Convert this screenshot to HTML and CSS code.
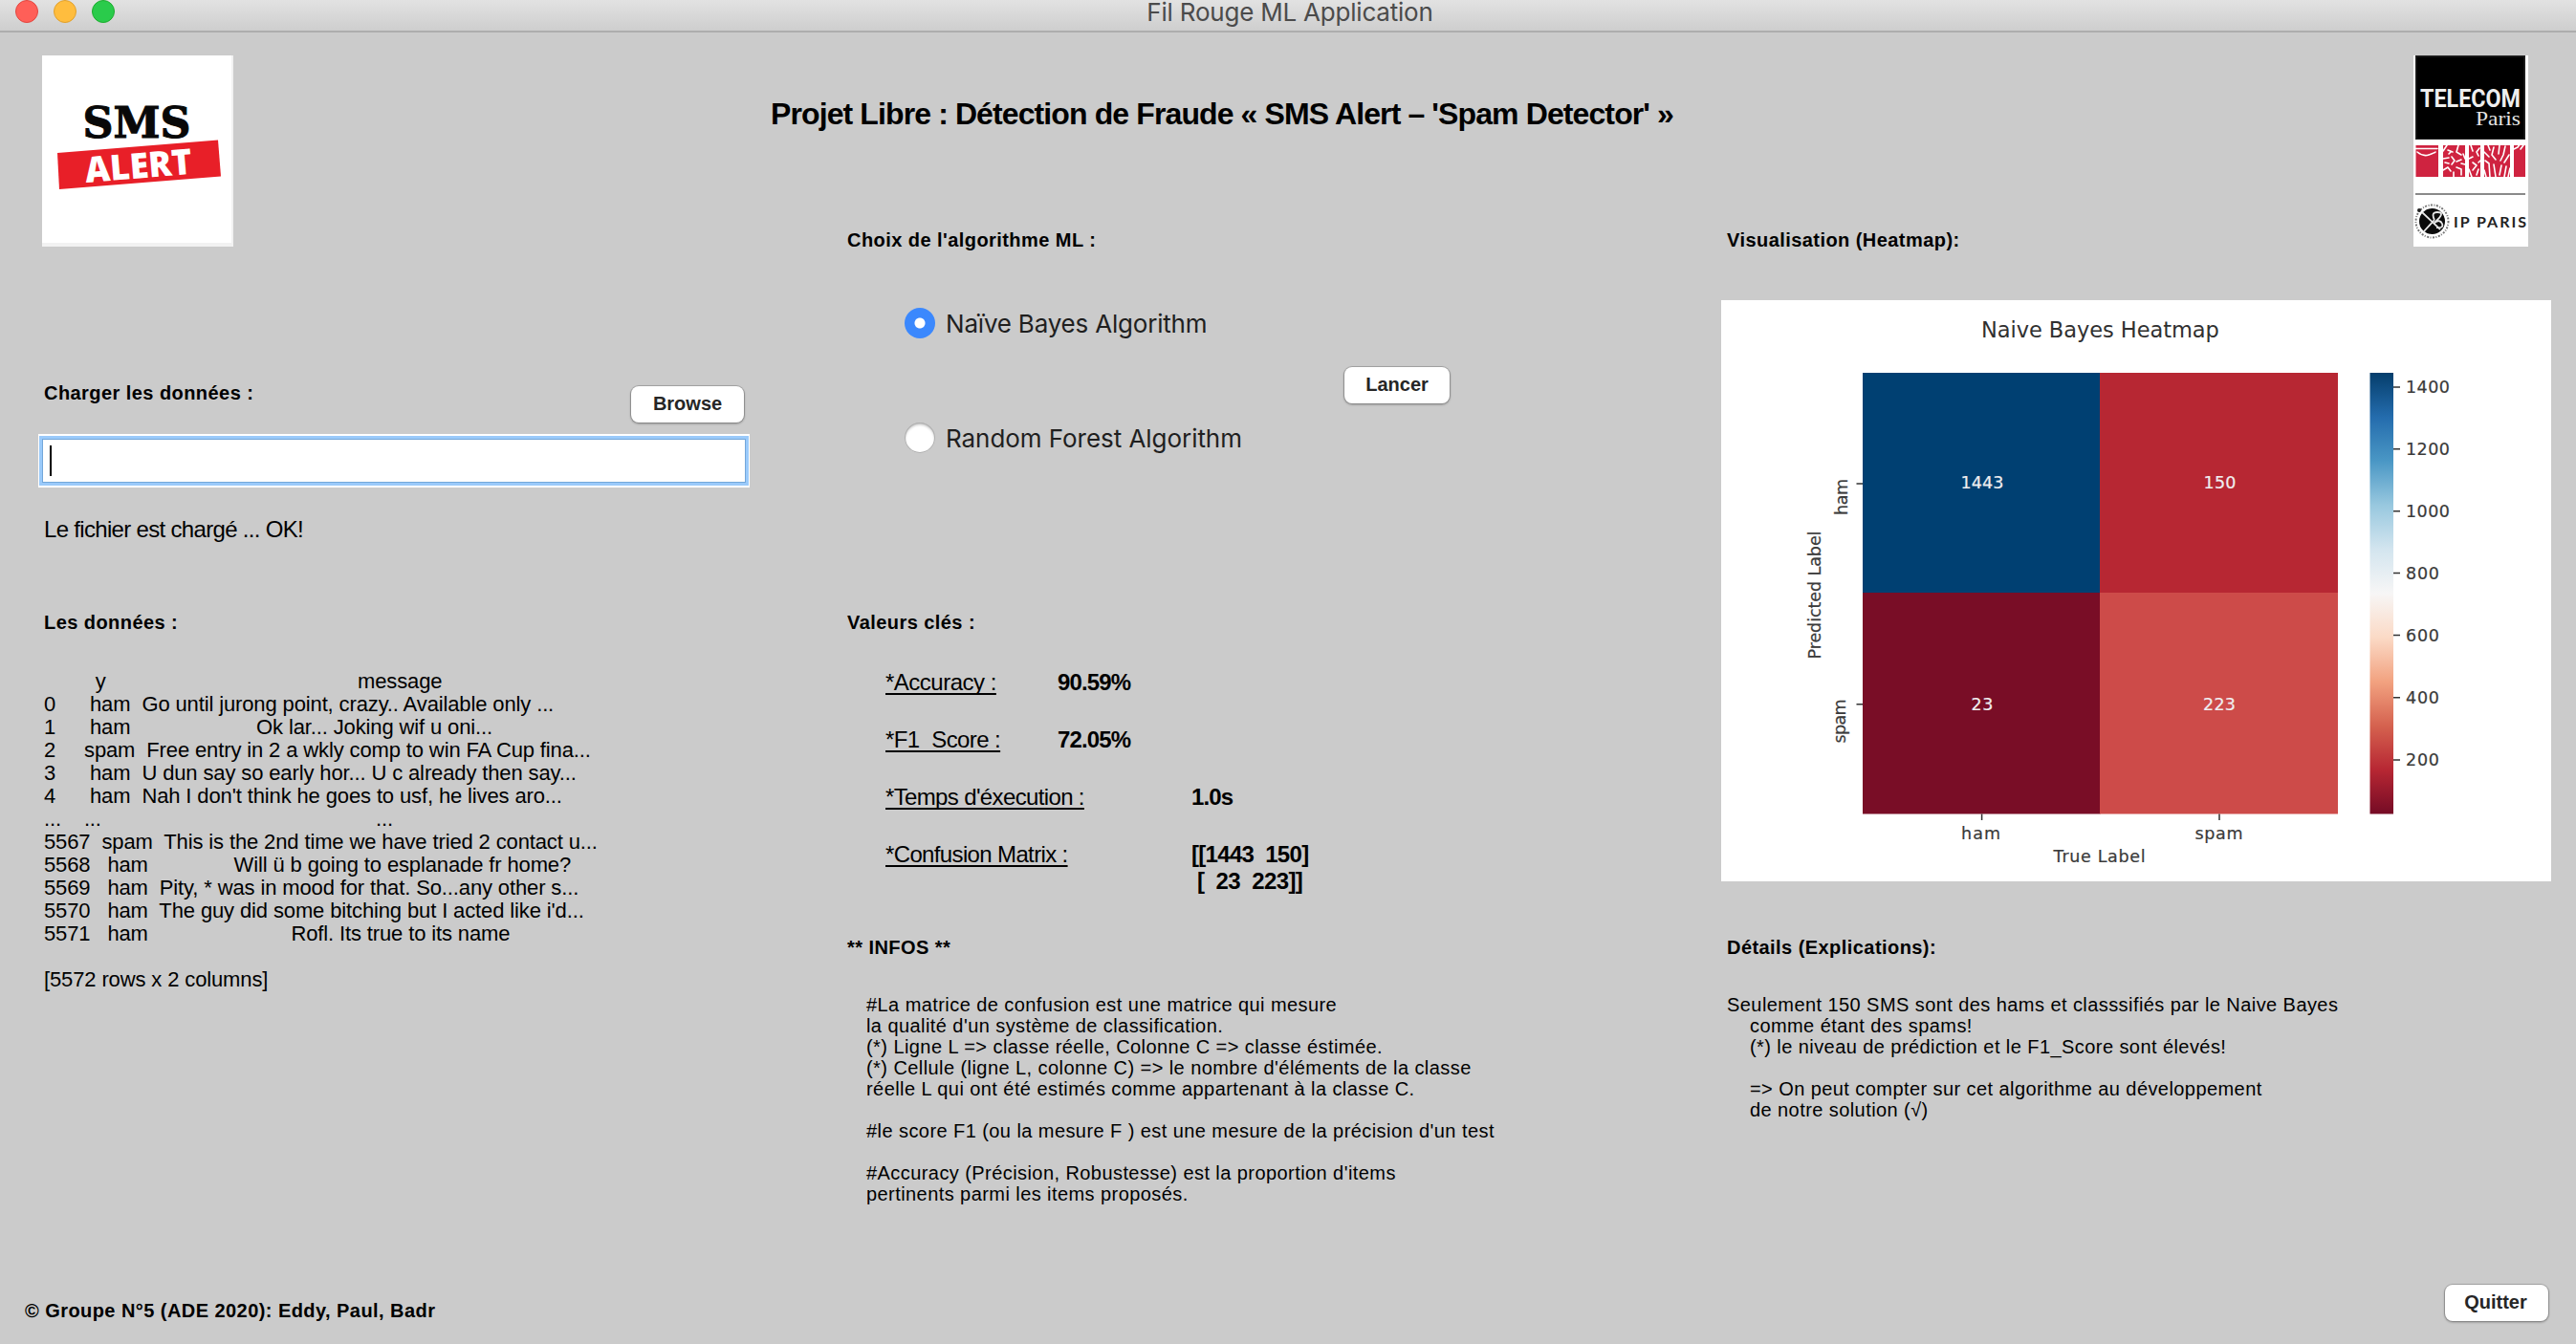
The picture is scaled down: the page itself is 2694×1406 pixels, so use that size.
FILE: index.html
```html
<!DOCTYPE html>
<html lang="fr">
<head>
<meta charset="utf-8">
<title>Fil Rouge ML Application</title>
<link rel="stylesheet" href="styles.css">
</head>
<body>
<header class="titlebar">
  <div class="lights"><i class="light light-close"></i><i class="light light-min"></i><i class="light light-max"></i></div>
  <span class="titlebar-text">Fil Rouge ML Application</span>
</header>

<main class="columns">
  <section class="col col-left">
    <svg class="logo-sms" width="200" height="200" viewBox="0 0 200 200">
      <rect width="200" height="200" fill="#f2f2f2"/>
      <rect width="198" height="196" fill="#fff"/>
      <text x="99" y="85.500" class="logo-serif" text-anchor="middle" textLength="113" lengthAdjust="spacingAndGlyphs">SMS</text>
      <path d="M16 102 184 88.500 187 126.500 18 140z" fill="#e81f28"/>
      <g transform="translate(46 133) rotate(-4.700)"><text class="logo-alert" x="0" y="0" textLength="112" lengthAdjust="spacingAndGlyphs">ALERT</text></g>
    </svg>
    <div class="load-row">
      <h2>Charger les données :</h2>
      <button class="btn btn-browse">Browse</button>
    </div>
    <div class="field"><span class="caret"></span></div>
    <p class="status">Le fichier est chargé ... OK!</p>
    <h2 class="mt-72">Les données :</h2>
    <pre class="table">         y                                            message
0      ham  Go until jurong point, crazy.. Available only ...
1      ham                      Ok lar... Joking wif u oni...
2     spam  Free entry in 2 a wkly comp to win FA Cup fina...
3      ham  U dun say so early hor... U c already then say...
4      ham  Nah I don't think he goes to usf, he lives aro...
...    ...                                                ...
5567  spam  This is the 2nd time we have tried 2 contact u...
5568   ham               Will ü b going to esplanade fr home?
5569   ham  Pity, * was in mood for that. So...any other s...
5570   ham  The guy did some bitching but I acted like i'd...
5571   ham                         Rofl. Its true to its name

[5572 rows x 2 columns]</pre>
  </section>

  <section class="col col-mid">
    <h1>Projet Libre : Détection de Fraude « SMS Alert – 'Spam Detector' »</h1>
    <div class="block">
      <h2>Choix de l'algorithme ML :</h2>
      <div class="choice">
        <div class="radios">
          <div class="option"><span class="radio radio-on"></span><span class="option-a">Naïve Bayes Algorithm</span></div>
          <div class="option"><span class="radio"></span><span class="option-b">Random Forest Algorithm</span></div>
        </div>
        <button class="btn btn-run">Lancer</button>
      </div>
      <h2 class="mt-166">Valeurs clés :</h2>
      <div class="metrics">
        <div class="metric"><span class="m-name m-acc">*Accuracy :</span><b>90.59%</b></div>
        <div class="metric"><span class="m-name m-f1">*F1_Score :</span><b>72.05%</b></div>
        <div class="metric metric-wide"><span class="m-name">*Temps d'éxecution :</span><b>1.0s</b></div>
        <div class="metric metric-wide"><span class="m-name">*Confusion Matrix :</span><b class="matrix">[[1443  150]
<span class="matrix-row"> [  23  223]]</span></b></div>
      </div>
      <h2 class="mt-44">** INFOS **</h2>
      <pre class="notes notes-mid">#La matrice de confusion est une matrice qui mesure
la qualité d'un système de classification.
(*) Ligne L =&gt; classe réelle, Colonne C =&gt; classe éstimée.
(*) Cellule (ligne L, colonne C) =&gt; le nombre d'éléments de la classe
réelle L qui ont été estimés comme appartenant à la classe C.

#le score F1 (ou la mesure F ) est une mesure de la précision d'un test

#Accuracy (Précision, Robustesse) est la proportion d'items
pertinents parmi les items proposés.</pre>
    </div>
  </section>

  <section class="col col-right">
    <div class="right-head">
      <h2>Visualisation (Heatmap):</h2>
      <svg width="120" height="200" viewBox="0 0 120 200">
        <rect width="120" height="200" fill="#fff"/>
        <rect x="2" y="0" width="115" height="88" fill="#222"/>
        <rect x="3.500" y="1.500" width="112" height="85.500" fill="#000"/>
        <text x="7" y="53.500" class="tp-name" textLength="105" lengthAdjust="spacingAndGlyphs">TELECOM</text>
        <text x="65" y="73" class="tp-city" textLength="47" lengthAdjust="spacingAndGlyphs">Paris</text>
        <path fill="#cf2340" d="M2.500 94h23.500v33H2.500zM31 94h23v33H31zM58 94h12v33H58zM74 94h27v33H74zM105 94h12v33h-12z"/>
        <g fill="none" stroke="#fff" stroke-linecap="round" stroke-linejoin="round" stroke-width="1.600">
          <path d="M2 97.500h23M4 101q6 5 12 3t7-3"/>
          <path d="M31 100l4-6M36 99l5 2M47 94l-2 7 5 3M31 108l6-1M40 106l3 4-3 4M50 109l-5 2M31 120l5-3 3 4M45 117l5 2v6M33 112l4 1M52 103l2 5M54 114l-4-1M42 122v5M37 103l2-2"/>
          <path d="M60 94l2 6M69 97l-3 4 2 4M58 108l4-2M62 112l4 3-4 5M70 110l-2 2M58 119l3 8M68 119l-2 6"/>
          <path d="M74 101l5 5M78 94l2 5M84 96l-2 8 4 5M90 94l-1 9M96 95l-2 9-3 6M100 104l-5 8M75 110l4 3 1 14M84 114l2 13M92 115l-2 10M97 116l-2 11M74 120l2 7M101 118l-2 9"/>
          <path d="M105 98l4-2 3-4M115 94l-3 4"/>
        </g>
        <path d="M2 145h115" stroke="#8a8a8a" stroke-width="2"/>
        <circle cx="19.500" cy="173.500" r="17" fill="none" stroke="#777" stroke-width="2" stroke-dasharray="2 1.600 1 1.400"/>
        <circle cx="19.500" cy="173.500" r="13.500" fill="#0b0b0b"/>
        <path d="M9 164 28 182M11 184 22 172M22 172q-4-8 3-8t2 6l-5 5q6-4 8 1t-6 4" fill="none" stroke="#e8e8e8" stroke-width="1.800"/>
        <circle cx="6" cy="162" r="2" fill="#222"/>
        <text x="42" y="179.500" class="tp-ip" textLength="76">IP PARIS</text>
      </svg>
    </div>
    <svg class="heatmap" width="868" height="608" viewBox="1800 314 868 608">
      <defs>
        <linearGradient id="rdbu" x1="0" y1="1" x2="0" y2="0">
          <stop offset="0" stop-color="#750b25"/><stop offset=".1" stop-color="#b72733"/><stop offset=".2" stop-color="#d5624f"/>
          <stop offset=".3" stop-color="#f2a280"/><stop offset=".4" stop-color="#fbdac6"/><stop offset=".5" stop-color="#f7f6f6"/>
          <stop offset=".6" stop-color="#d3e5ef"/><stop offset=".7" stop-color="#98c8df"/><stop offset=".8" stop-color="#4a97c5"/>
          <stop offset=".9" stop-color="#246cad"/><stop offset="1" stop-color="#053e6c"/>
        </linearGradient>
      </defs>
      <rect x="1800" y="314" width="868" height="608" fill="#fff"/>
      <rect x="1948" y="390" width="248.500" height="231" fill="#004072"/>
      <rect x="2196" y="390" width="249" height="231" fill="#b72733"/>
      <rect x="1948" y="620" width="248.500" height="231.500" fill="#790d26"/>
      <rect x="2196" y="620" width="249" height="231.500" fill="#cd4b49"/>
      <rect x="2478.500" y="390" width="24.500" height="461.500" fill="url(#rdbu)"/>
      <g class="ticks"><path d="M2503 405h7M2503 469.800h7M2503 534.700h7M2503 599.600h7M2503 664.500h7M2503 729.800h7M2503 795.100h7M1941.500 506h6.500M1941.500 736.800h6.500M2072.600 851.500v6.500M2321 851.500v6.500"/></g>
      <text class="plot-title" x="2196.400" y="353" text-anchor="middle" textLength="249">Naive Bayes Heatmap</text>
      <g class="plot" text-anchor="middle">
        <text class="annot" x="2073" y="511" textLength="45">1443</text>
        <text class="annot" x="2321.500" y="511" textLength="34">150</text>
        <text class="annot" x="2073" y="742.500" textLength="23">23</text>
        <text class="annot" x="2321" y="742.500" textLength="34">223</text>
        <text x="2071.500" y="878" textLength="41">ham</text>
        <text x="2320.500" y="878" textLength="50">spam</text>
        <text x="2195.600" y="902" textLength="96">True Label</text>
        <text transform="translate(1932 520) rotate(-90)" textLength="38">ham</text>
        <text transform="translate(1930 754.500) rotate(-90)" textLength="46">spam</text>
        <text transform="translate(1903.500 622.500) rotate(-90)" textLength="134">Predicted Label</text>
      </g>
      <g class="plot">
        <text x="2516" y="410.500" textLength="46">1400</text>
        <text x="2516" y="475.500" textLength="46">1200</text>
        <text x="2516" y="540.500" textLength="46">1000</text>
        <text x="2516" y="605.500" textLength="35">800</text>
        <text x="2516" y="671" textLength="35">600</text>
        <text x="2516" y="736" textLength="35">400</text>
        <text x="2516" y="801" textLength="35">200</text>
      </g>
    </svg>
    <h2 class="mt-58">Détails (Explications):</h2>
    <pre class="notes">Seulement 150 SMS sont des hams et classsifiés par le Naive Bayes
    comme étant des spams!
    (*) le niveau de prédiction et le F1_Score sont élevés!

    =&gt; On peut compter sur cet algorithme au développement
    de notre solution (√)</pre>
  </section>
</main>

<footer class="footer">
  <h2>© Groupe N°5 (ADE 2020): Eddy, Paul, Badr</h2>
  <button class="btn btn-quit">Quitter</button>
</footer>
</body>
</html>
```
FILE: styles.css
```css
* { box-sizing: border-box; margin: 0; padding: 0; }

body {
  width: 2694px;
  height: 1406px;
  overflow: hidden;
  background: #cbcbcb;
  color: #000;
  font-family: "Liberation Sans", Arial, sans-serif;
}

h1, h2, p, pre { font-family: inherit; white-space: pre; }
h1 { font-size: 32px; line-height: 36px; letter-spacing: -0.89px; }
h2 { font-size: 20px; line-height: 22px; letter-spacing: 0.44px; }

/* Title bar */
.titlebar {
  display: grid;
  grid-template-columns: 1fr auto 1fr;
  height: 34px;
  background: linear-gradient(#e2e2e2, #cecece);
  border-bottom: 2px solid #adadad;
}
.lights { display: flex; gap: 16px; padding-left: 16px; }
.light { width: 24px; height: 24px; border-radius: 50%; border: 1px solid; }
.light-close { background: #ff5f58; border-color: #e2463f; }
.light-min { background: #ffbd3e; border-color: #e0a02d; }
.light-max { background: #2acb4b; border-color: #1dad2e; }
.titlebar-text {
  padding-left: 4px;
  font: 26px/26px Inter, sans-serif;
  letter-spacing: -0.21px;
  color: #4b4b4b;
}

/* Columns */
.columns { display: grid; grid-template-columns: 800px 1000px 1fr; height: 1309px; }
.col { display: flex; flex-direction: column; align-items: flex-start; }
.mt-44 { margin-top: 44px; }
.mt-58 { margin-top: 58px; }
.mt-72 { margin-top: 72px; }
.mt-166 { margin-top: 166px; }

.col-left { padding: 24px 0 0 46px; }
.logo-sms { display: block; margin-left: -2px; }
.logo-serif { font: bold 44px "DejaVu Serif", serif; fill: #080808; stroke: #080808; stroke-width: 1px; }
.logo-alert { font: 800 37px "Open Sans", sans-serif; fill: #fff; }
.load-row {
  display: flex;
  justify-content: space-between;
  align-items: flex-start;
  width: 732px;
  margin-top: 142px;
}
.field {
  width: 744px;
  height: 56px;
  margin: 12px 0 0 -6px;
  padding: 6px 8px;
  background: #fff;
  border: 2px solid #fff;
  border-width: 2px 1px;
  box-shadow: inset 0 0 0 3px #9acafa, inset 0 0 0 4px #73a7da;
}
.caret { display: block; width: 2px; height: 32px; margin: 4px 0 0 3px; background: #000; }
.status { margin-top: 30px; font-size: 24px; line-height: 28px; letter-spacing: -0.68px; }
.table { margin-top: 39px; font-size: 22px; line-height: 24px; letter-spacing: -0.128px; }

/* Buttons */
.btn {
  height: 38px;
  padding-bottom: 2px;
  border: 0;
  border-radius: 8px;
  background: #fff;
  box-shadow: 0 0 0 1px rgba(0, 0, 0, .16), 0 1px 2px 1px rgba(0, 0, 0, .2);
  color: #262626;
  font: bold 20px/22px "Liberation Sans", Arial, sans-serif;
}
.btn-browse { width: 118px; margin-top: 4px; }
.btn-run { width: 110px; }
.btn-quit { width: 108px; padding-right: 2px; }

/* Middle column */
.col-mid { padding: 67px 0 0 6px; }
.block { padding-left: 80px; margin-top: 103px; }
.choice {
  display: flex;
  justify-content: space-between;
  align-items: center;
  width: 630px;
  margin-top: 60px;
  padding-left: 60px;
}
.choice .btn { margin-bottom: -10px; }
.radios { display: flex; flex-direction: column; gap: 88px; }
.option {
  display: flex;
  align-items: center;
  gap: 11px;
  height: 32px;
  font: 26px/32px Inter, sans-serif;
  color: #1f1f1f;
}
.option-a { padding-top: 2px; letter-spacing: -0.2px; }
.option-b { padding-top: 2px; letter-spacing: -0.05px; }
.radio {
  width: 32px;
  height: 32px;
  border-radius: 50%;
  background: #fff;
  box-shadow: inset 0 0 0 1px #b0b0b0, inset 0 2px 3px rgba(0, 0, 0, .3);
}
.radio-on {
  background: radial-gradient(circle, #fff 5px, #3b88fd 6px);
  box-shadow: none;
}
.metrics { padding-left: 40px; margin-top: 38px; font-size: 24px; line-height: 28px; letter-spacing: -0.64px; }
.metric { display: grid; grid-template-columns: 180px auto; justify-content: start; justify-items: start; margin-bottom: 32px; }
.metric:last-child { margin-bottom: 0; }
.metric-wide { grid-template-columns: 320px auto; }
.metric b { letter-spacing: -0.85px; }
.metric .matrix { white-space: pre; letter-spacing: -0.69px; }
.matrix-row { letter-spacing: -0.6px; }
.m-name {
  height: 28px;
  text-decoration: underline;
  text-decoration-thickness: 2px;
  text-underline-offset: 3px;
  text-decoration-skip-ink: none;
}
.m-acc { letter-spacing: -0.5px; }
.m-f1 { letter-spacing: -0.6px; }
.notes { margin-top: 38px; font-size: 20px; line-height: 22px; letter-spacing: 0.43px; }
.notes-mid { margin-left: 20px; }

/* Right column */
.col-right { padding: 24px 0 0 6px; }
.right-head { display: flex; justify-content: space-between; align-items: flex-start; width: 838px; }
.right-head h2 { margin-top: 182px; }
.heatmap { display: block; margin: 52px 0 0 -6px; }
.plot-title { font: 22.500px "DejaVu Sans", sans-serif; fill: #303030; }
.plot { font: 17.500px "DejaVu Sans", sans-serif; fill: #3a3a3a; stroke: #3a3a3a; stroke-width: .2px; }
.plot .annot { fill: #f0eef0; stroke: #f0eef0; }
.ticks { stroke: #333; stroke-width: 1.500px; }
.tp-name { font: bold 25px Roboto, sans-serif; fill: #eee; }
.tp-city { font: 22px "Liberation Serif", serif; fill: #e4e4e4; }
.tp-ip { font: bold 16px Lato, sans-serif; fill: #222; }

/* Footer */
.footer { display: flex; justify-content: space-between; align-items: flex-start; padding: 1px 29px 0 26px; }
.footer h2 { margin-top: 16px; }
```
